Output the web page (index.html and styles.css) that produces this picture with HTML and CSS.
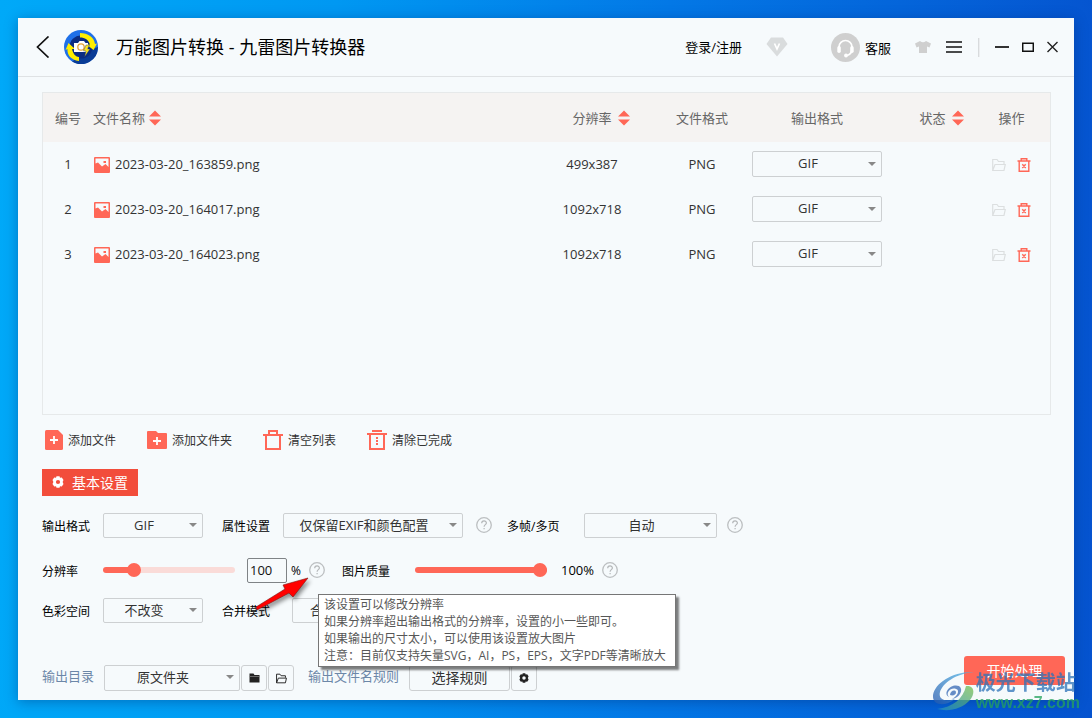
FILE: index.html
```html
<!DOCTYPE html>
<html lang="zh-CN">
<head>
<meta charset="utf-8">
<title>万能图片转换 - 九雷图片转换器</title>
<link rel="stylesheet" href="styles.css">
</head>
<body>
<svg class="defs" aria-hidden="true">
  <symbol id="sort" viewBox="0 0 12 16"><path d="M6 0.500L12 6.500H0zM0 9.500H12L6 15.500z" fill="#ff6757"/></symbol>
  <symbol id="image" viewBox="0 0 16 16"><path fill="#ff6757" fill-rule="evenodd" d="M1 0H15Q16 0 16 1V15Q16 16 15 16H1Q0 16 0 15V1Q0 0 1 0zM1.500 1.500V6.500L4 5.500L8 9.500L11.500 7L14.500 10V1.500zM9.500 4H12V6H9.500z"/></symbol>
  <symbol id="folder-open" viewBox="0 0 14 14"><path d="M0.700 12.500V1.500H5L6.500 3.500H12V6M0.700 12.500L3 6.500H13.300L12 12.500z" fill="none" stroke="currentColor" stroke-width="1.200"/></symbol>
  <symbol id="trash-x" viewBox="0 0 14 14"><path d="M0.500 3H13.500M4.200 3V0.800H9.800V3M2.200 3V13.200H11.800V3M5.300 6.300L8.700 10M8.700 6.300L5.300 10" fill="none" stroke="#ff6757" stroke-width="1.400"/></symbol>
  <symbol id="help" viewBox="0 0 16 16"><circle cx="8" cy="8" r="7.300" fill="none" stroke="#bcbfc1" stroke-width="1.300"/><path d="M5.700 6.200C5.700 3.200 10.400 3.200 10.400 6C10.400 7.600 8.100 7.700 8.100 9.700M8.100 11V12.300" fill="none" stroke="#b4b7b9" stroke-width="1.200"/></symbol>
  <symbol id="gear" viewBox="0 0 12 12"><path fill="currentColor" fill-rule="evenodd" d="M4.500 0.300H7.500L8 1.800L9.800 1.400L11.500 4L10.600 6L11.500 8L9.800 10.600L8 10.200L7.500 11.700H4.500L4 10.200L2.200 10.600L0.500 8L1.400 6L0.500 4L2.200 1.400L4 1.800zM6 3.900A2.100 2.100 0 1 0 6 8.100A2.100 2.100 0 1 0 6 3.900z"/></symbol>
</svg>

<main class="window">
  <header class="titlebar">
    <button class="plain" aria-label="返回"><svg width="14" height="22" viewBox="0 0 14 22"><path d="M12.500 0.500L1.500 11L12.500 21.500" fill="none" stroke="#111" stroke-width="1.700"/></svg></button>
    <svg class="logo" width="34" height="34" viewBox="0 0 34 34">
      <circle cx="17" cy="17" r="17" fill="#1f70e8"/>
      <path d="M34 17A17 17 0 0 1 8 31.500L26 20z" fill="#0a3c96"/>
      <circle cx="17" cy="17" r="11.500" fill="#0b2c82"/>
      <path d="M16 3C24 3 30 7 31 14L33 13.500L29.500 20L22.500 14.500L26 14.500C24.500 10 21 7.500 16 7.500z" fill="#ffef00"/>
      <path d="M15 31C7 30 3 25 3.500 19L1.500 20L4.500 13L11 19L8 19C9 24 12 27 15 27z" fill="#ffef00"/>
      <path d="M10 13H14L15.500 11H20L21.500 13H24V22H10z" fill="#fff"/>
      <circle cx="17" cy="17" r="3.200" fill="#fff" stroke="#e3a33d" stroke-width="1.300"/>
      <path d="M22 15L19.500 21H22L20.500 27L26 19H23.500L25.500 15z" fill="#ffe61a" stroke="#0b2c82" stroke-width=".4"/>
    </svg>
    <h1>万能图片转换 - 九雷图片转换器</h1>
    <nav class="tools">
      <a class="login" href="#">登录/注册</a>
      <button class="plain vip" aria-label="会员"><svg width="22" height="20" viewBox="0 0 22 20"><path d="M5 0.500H17L21.500 7L11 19.500L0.500 7z" fill="#d9dcdd"/><path d="M8.500 6.500L11 12L13.500 6.500" fill="none" stroke="#fff" stroke-width="1.700"/></svg></button>
      <button class="plain service"><svg width="29" height="29" viewBox="0 0 29 29"><circle cx="14.500" cy="14.500" r="14.500" fill="#cfcfcf"/><path d="M8 16V14A6.500 6.500 0 0 1 21 14V17Q20 21.500 16 22.500" fill="none" stroke="#fff" stroke-width="1.700"/><rect x="6.300" y="13" width="3.500" height="7" rx="1.700" fill="#fff"/><rect x="19.200" y="13" width="3.500" height="7" rx="1.700" fill="#fff"/><circle cx="15" cy="22.500" r="1.900" fill="#fff"/></svg>客服</button>
      <button class="plain skin" aria-label="皮肤"><svg width="16" height="12" viewBox="0 0 16 12"><path d="M5 0Q8 2.500 11 0L16 2.500L14.500 6.500L12 5.500V12H4V5.500L1.500 6.500L0 2.500z" fill="#cfcfcf"/></svg></button>
      <button class="plain menu" aria-label="菜单"><svg width="16" height="12" viewBox="0 0 16 12"><path d="M0 1H16M0 6H16M0 11H16" stroke="#111" stroke-width="1.600"/></svg></button>
      <span class="divider"></span>
      <button class="plain" aria-label="最小化"><svg width="14" height="12" viewBox="0 0 14 12"><path d="M0 6H14" stroke="#333" stroke-width="2"/></svg></button>
      <button class="plain max" aria-label="最大化"><svg width="12" height="12" viewBox="0 0 12 12"><path d="M0.700 2V10.300H11.300V2M0 2.200H12" fill="none" stroke="#111" stroke-width="1.500"/></svg></button>
      <button class="plain close" aria-label="关闭"><svg width="11" height="12" viewBox="0 0 11 12"><path d="M0.500 1L10.500 11M10.500 1L0.500 11" stroke="#222" stroke-width="1.400"/></svg></button>
    </nav>
  </header>

  <div class="content">
    <section class="panel">
      <table>
        <colgroup><col class="c-no"><col><col class="c-res"><col class="c-fmt"><col class="c-out"><col class="c-status"><col class="c-ops"></colgroup>
        <thead><tr>
          <th>编号</th>
          <th class="name">文件名称<svg class="sort tight"><use href="#sort"/></svg></th>
          <th class="res">分辨率<svg class="sort"><use href="#sort"/></svg></th>
          <th>文件格式</th><th>输出格式</th>
          <th class="status">状态<svg class="sort"><use href="#sort"/></svg></th>
          <th class="ops">操作</th>
        </tr></thead>
        <tbody>
          <tr><td>1</td><td class="name"><svg class="thumb"><use href="#image"/></svg>2023-03-20_163859.png</td><td>499x387</td><td>PNG</td>
            <td><span class="select row-select"><select aria-label="输出格式"><option>GIF</option></select></span></td><td></td>
            <td class="ops"><button class="plain open" aria-label="打开"><svg><use href="#folder-open"/></svg></button><button class="plain" aria-label="删除"><svg><use href="#trash-x"/></svg></button></td></tr>
          <tr><td>2</td><td class="name"><svg class="thumb"><use href="#image"/></svg>2023-03-20_164017.png</td><td>1092x718</td><td>PNG</td>
            <td><span class="select row-select"><select aria-label="输出格式"><option>GIF</option></select></span></td><td></td>
            <td class="ops"><button class="plain open" aria-label="打开"><svg><use href="#folder-open"/></svg></button><button class="plain" aria-label="删除"><svg><use href="#trash-x"/></svg></button></td></tr>
          <tr><td>3</td><td class="name"><svg class="thumb"><use href="#image"/></svg>2023-03-20_164023.png</td><td>1092x718</td><td>PNG</td>
            <td><span class="select row-select"><select aria-label="输出格式"><option>GIF</option></select></span></td><td></td>
            <td class="ops"><button class="plain open" aria-label="打开"><svg><use href="#folder-open"/></svg></button><button class="plain" aria-label="删除"><svg><use href="#trash-x"/></svg></button></td></tr>
        </tbody>
      </table>
    </section>

    <div class="toolbar">
      <button class="plain"><svg width="18" height="20" viewBox="0 0 18 20"><path d="M1.500 0H13L18 5V18.500Q18 20 16.500 20H1.500Q0 20 0 18.500V1.500Q0 0 1.500 0z" fill="#ff6757"/><path d="M9 6V14M5 10H13" stroke="#fff" stroke-width="1.800"/></svg>添加文件</button>
      <button class="plain"><svg width="20" height="20" viewBox="0 0 20 20"><path d="M1 1H9L11 3H19Q20 3 20 4V18Q20 19 19 19H1Q0 19 0 18V2Q0 1 1 1z" fill="#ff6757"/><path d="M10 7V15M6 11H14" stroke="#fff" stroke-width="1.800"/></svg>添加文件夹</button>
      <button class="plain"><svg width="20" height="20" viewBox="0 0 20 20"><path d="M0 5H20M6 5V1H14V5M3 5V19H17V5" fill="none" stroke="#ff6757" stroke-width="2"/></svg>清空列表</button>
      <button class="plain"><svg width="20" height="20" viewBox="0 0 20 20"><path d="M0 4H20M5 1H15M3 4V19H17V4" fill="none" stroke="#ff6757" stroke-width="2"/><path d="M10 7V15" stroke="#ff6757" stroke-width="2" stroke-dasharray="2 1"/></svg>清除已完成</button>
    </div>

    <button class="tab"><svg width="12" height="12"><use href="#gear"/></svg>基本设置</button>

    <form class="settings">
      <div class="line first">
        <label class="lead" for="fmt">输出格式</label>
        <span class="select w100"><select id="fmt"><option>GIF</option></select></span>
        <label class="second" for="attr">属性设置</label>
        <span class="select w180"><select id="attr"><option>仅保留EXIF和颜色配置</option></select></span>
        <svg class="help"><use href="#help"/></svg>
        <label class="third" for="frames">多帧/多页</label>
        <span class="select w133"><select id="frames"><option>自动</option></select></span>
        <svg class="help near"><use href="#help"/></svg>
      </div>
      <div class="line">
        <label class="lead" for="res">分辨率</label>
        <input class="slider low" id="res" type="range" min="0" max="100" value="20">
        <input class="percent" type="text" value="100" aria-label="分辨率百分比"><span class="unit">%</span>
        <span class="help-anchor">
          <svg class="help"><use href="#help"/></svg>
          <svg class="pointer" width="66" height="46" viewBox="0 0 66 46"><path d="M5 37L34 19L32 15L57 8L42 27L38 23L6 40z" fill="#f00" stroke="#7a1512" stroke-width=".6"/></svg>
          <span class="tooltip" role="tooltip">该设置可以修改分辨率<br>如果分辨率超出输出格式的分辨率，设置的小一些即可。<br>如果输出的尺寸太小，可以使用该设置放大图片<br>注意：目前仅支持矢量SVG，AI，PS，EPS，文字PDF等清晰放大</span>
        </span>
        <label class="quality" for="q">图片质量</label>
        <input class="slider" id="q" type="range" min="0" max="100" value="100">
        <output for="q">100%</output>
        <svg class="help small-gap"><use href="#help"/></svg>
      </div>
      <div class="line last">
        <label class="lead" for="space">色彩空间</label>
        <span class="select w100"><select id="space"><option>不改变</option></select></span>
        <label class="second wide" for="merge">合并模式</label>
        <span class="select merge"><select id="merge"><option>合并</option></select></span>
      </div>
    </form>

    <footer>
      <div class="output">
        <label class="dir" for="dir">输出目录</label>
        <span class="select w136"><select id="dir"><option>原文件夹</option></select></span>
        <button class="box" aria-label="选择文件夹"><svg width="11" height="10" viewBox="0 0 11 10"><path d="M0.500 0.500H4.500L5.500 2H10.500V9.500H0.500z" fill="#222"/><path d="M0 3.500H11" stroke="#888" stroke-width=".7"/></svg></button>
        <button class="box dark" aria-label="打开文件夹"><svg width="11" height="11"><use href="#folder-open"/></svg></button>
        <label class="rule" for="rule">输出文件名规则</label>
        <button class="box choose" id="rule">选择规则</button>
        <button class="box dark" aria-label="规则设置"><svg width="10" height="10"><use href="#gear"/></svg></button>
      </div>
      <button class="start">开始处理</button>
    </footer>
  </div>
</main>

<div class="watermark">
  <svg width="42" height="40" viewBox="0 0 42 40">
    <defs><linearGradient id="wb" x1="0" y1="1" x2="1" y2="0"><stop offset="0" stop-color="#2859ad"/><stop offset="1" stop-color="#4db7e8"/></linearGradient><linearGradient id="wg" x1="0" y1="1" x2="1" y2="0"><stop offset="0" stop-color="#238fc4"/><stop offset="1" stop-color="#78bf4b"/></linearGradient></defs>
    <path d="M41 1C20 0 2 12 0 24C-1 35 12 36 22 28C13 31 5 29 7 21C10 12 22 3 41 1z" fill="url(#wb)"/>
    <path d="M4 38C20 36 30 28 33 15C42 14 42 23 37 29C29 38 16 41 4 38z" fill="url(#wg)"/>
    <path d="M16 26C9 22 18 12 26 15C31 18 27 27 19 28C25 25 27 19 23 18C18 16 12 22 16 26z" fill="#3568b4"/>
    <path d="M17 24C17 20 22 18 23 21C23 24 20 25 17 24z" fill="#3568b4"/>
  </svg>
  <div><div class="mark-name">极光下载站</div><div class="mark-url">www.xz7.com</div></div>
</div>
</body>
</html>
```

FILE: styles.css
```css
* { box-sizing: border-box; }

body {
  margin: 0;
  min-height: 100vh;
  padding: 18px;
  display: flex;
  position: relative;
  overflow: hidden;
  background: linear-gradient(92deg, #00a9f8 0%, #0098f2 30%, #0378e6 60%, #0553cf 100%);
  font-family: "Open Sans", "Noto Sans CJK SC", sans-serif;
  font-size: 13px;
  color: #333;
}

button, select, input { font: inherit; color: inherit; margin: 0; }
svg { display: block; flex: none; }
.defs { position: absolute; width: 0; height: 0; }

.window {
  flex: 1;
  display: flex;
  flex-direction: column;
  min-width: 0;
  background: #f6fafc;
  box-shadow: 0 2px 12px rgba(0, 40, 110, .4);
}

.plain {
  display: flex;
  align-items: center;
  padding: 0;
  border: 0;
  background: none;
}

/* title bar */
.titlebar {
  display: flex;
  align-items: center;
  height: 59px;
  padding: 0 16px 0 18px;
  border-bottom: 1px solid #dfe2e4;
  color: #000;
}
.logo { margin-left: 14px; }
h1 { margin: 0 0 0 18px; font-size: 18px; font-weight: 400; line-height: 24px; }
.tools { display: flex; align-items: center; margin-left: auto; }
.login { padding-bottom: 2px; color: inherit; text-decoration: none; }
.vip { margin-left: 24px; }
.service { margin-left: 43px; gap: 5px; }
.skin { margin-left: 24px; }
.menu { margin-left: 15px; }
.divider { width: 1px; height: 19px; margin: 0 16px; background: #d8dbdd; box-shadow: 1px 0 #eceef0; }
.max { margin-left: 13px; }
.close { margin-left: 13px; }

.content { flex: 1; display: flex; flex-direction: column; padding: 15px 23px 9px 24px; }

/* file list */
.panel { flex: 1; border: 1px solid #e6e9ea; }
table { width: 100%; table-layout: fixed; border-collapse: collapse; }
.c-no { width: 50px; }
.c-res { width: 120px; }
.c-fmt { width: 100px; }
.c-out { width: 130px; }
.c-status { width: 108px; }
.c-ops { width: 60px; }
th { height: 49px; padding: 0 0 1px; background: #f5f3f2; color: #666; font-weight: 400; }
td { height: 45px; padding: 0 0 2px; text-align: center; }
.name { text-align: left; }
.sort { display: inline-block; width: 12px; height: 16px; margin-left: 6px; vertical-align: -3px; }
.sort.tight { margin-left: 4px; }
th.res { padding-left: 18px; }
th.status { padding-left: 11px; }
.ops { padding-right: 17px; }
.thumb { display: inline-block; width: 16px; height: 16px; margin: 0 5px 0 1px; vertical-align: -4px; }
td.ops .plain { display: inline-block; vertical-align: middle; }
td.ops svg { width: 14px; height: 14px; }
.open { margin-right: 11px; color: #dcdfe0; }

/* drop-downs */
.select { display: block; position: relative; flex: none; height: 25px; }
.select select {
  display: block;
  width: 100%;
  height: 100%;
  padding: 0 18px 2px 0;
  appearance: none;
  border: 1px solid #cdd0d2;
  border-radius: 2px;
  background: transparent;
  text-align: center;
  text-align-last: center;
}
.select::after {
  content: "";
  position: absolute;
  right: 6px;
  top: 10px;
  border: 4px solid transparent;
  border-top-color: #888;
  border-bottom: 0;
}
.row-select { height: 26px; }
.row-select::after { top: 11px; }
.w100 { width: 100px; }
.w133 { width: 133px; }
.w136 { width: 136px; }
.w180 { width: 180px; }

.toolbar { display: flex; gap: 31px; margin: 15px 0 19px 3px; font-size: 12px; }
.toolbar .plain { gap: 5px; height: 20px; }

.tab {
  display: flex;
  align-self: flex-start;
  align-items: center;
  gap: 8px;
  height: 27px;
  padding: 0 10px 1px;
  border: 0;
  background: #f24d3b;
  color: #fff;
  font-size: 14px;
}

/* settings */
.settings { margin-top: 17px; }
.line { display: flex; align-items: center; height: 25px; margin-bottom: 20px; color: #333; }
.line:nth-child(2) { margin-bottom: 15px; }
.line.last { margin-bottom: 0; }
.line label { flex: none; font-size: 12px; line-height: 17px; padding-top: 2px; color: #000; }
.lead { width: 61px; }
.second { width: 61px; margin-left: 19px; }
.second.wide { width: 70px; }
.third { width: 77px; margin-left: 15px; }
.quality { width: 73px; margin-left: 17px; }
.help { width: 16px; height: 16px; margin: 0 0 2px 13px; }
.help.near { margin-left: 10px; }
.help.small-gap { margin-left: 7px; }
.merge { width: 180px; }
.merge select { text-align: left; text-align-last: left; padding-left: 17px; }

.slider { appearance: none; flex: none; width: 132px; height: 14px; margin: 0 1px 2px 0; background: transparent; }
.slider::-webkit-slider-runnable-track { height: 6px; border-radius: 3px; background: #ff6757; }
.slider.low::-webkit-slider-runnable-track { background: linear-gradient(90deg, #ff6757 30px, #fadbd8 30px); }
.slider::-webkit-slider-thumb { appearance: none; width: 14px; height: 14px; margin-top: -4px; border-radius: 50%; background: #ff6757; }

.percent { width: 40px; height: 25px; margin-left: 11px; padding: 0 2px 1px; border: 1px solid #7f8386; border-radius: 2px; background: transparent; color: #111; }
.unit { width: 11px; margin-left: 4px; font-size: 12px; color: #000; }
.line output { width: 34px; margin-left: 13px; padding-bottom: 2px; color: #000; }

.help-anchor { position: relative; flex: none; margin: 0 0 2px 7px; }
.help-anchor .help { margin: 0; }
.pointer { position: absolute; left: -58px; top: 8px; z-index: 2; filter: drop-shadow(2px 3px 2px rgba(0, 0, 0, .45)); }
.tooltip {
  position: absolute;
  left: 9px;
  top: 32px;
  z-index: 1;
  padding: 1px 9px 2px 5px;
  border: 1px solid #767676;
  background: #fff;
  box-shadow: 3px 3px 2px rgba(0, 0, 0, .5);
  color: #575757;
  font-size: 12px;
  line-height: 17px;
  white-space: nowrap;
}

/* bottom bar */
footer { display: flex; justify-content: space-between; align-items: flex-start; margin-top: 33px; }
.output { display: flex; align-items: center; margin-top: 9px; }
.output .select { height: 26px; }
.output label { color: #6c87a8; line-height: 20px; padding-bottom: 4px; }
.dir { width: 62px; }
.rule { margin: 0 10px 0 14px; }
.box {
  display: flex;
  align-items: center;
  justify-content: center;
  width: 26px;
  height: 26px;
  margin-left: 1px;
  padding: 0;
  border: 1px solid #cdd0d2;
  border-radius: 3px;
  background: transparent;
}
.box.dark { color: #222; }
.box.choose { width: 101px; margin-left: 0; padding-bottom: 2px; font-size: 14px; }
.start { width: 101px; height: 29px; margin-right: -14px; padding: 0 0 2px; border: 0; border-radius: 3px; background: #ff6757; color: #fff; font-size: 14px; }

.watermark { position: absolute; right: 12px; bottom: 7px; display: flex; align-items: center; gap: 1px; opacity: .75; pointer-events: none; }
.mark-name { color: #2c72b8; font-size: 20px; font-weight: 700; line-height: 24px; }
.mark-url { color: #25a35c; font-family: "Liberation Sans", sans-serif; font-size: 16px; font-weight: 700; line-height: 16px; }
```
